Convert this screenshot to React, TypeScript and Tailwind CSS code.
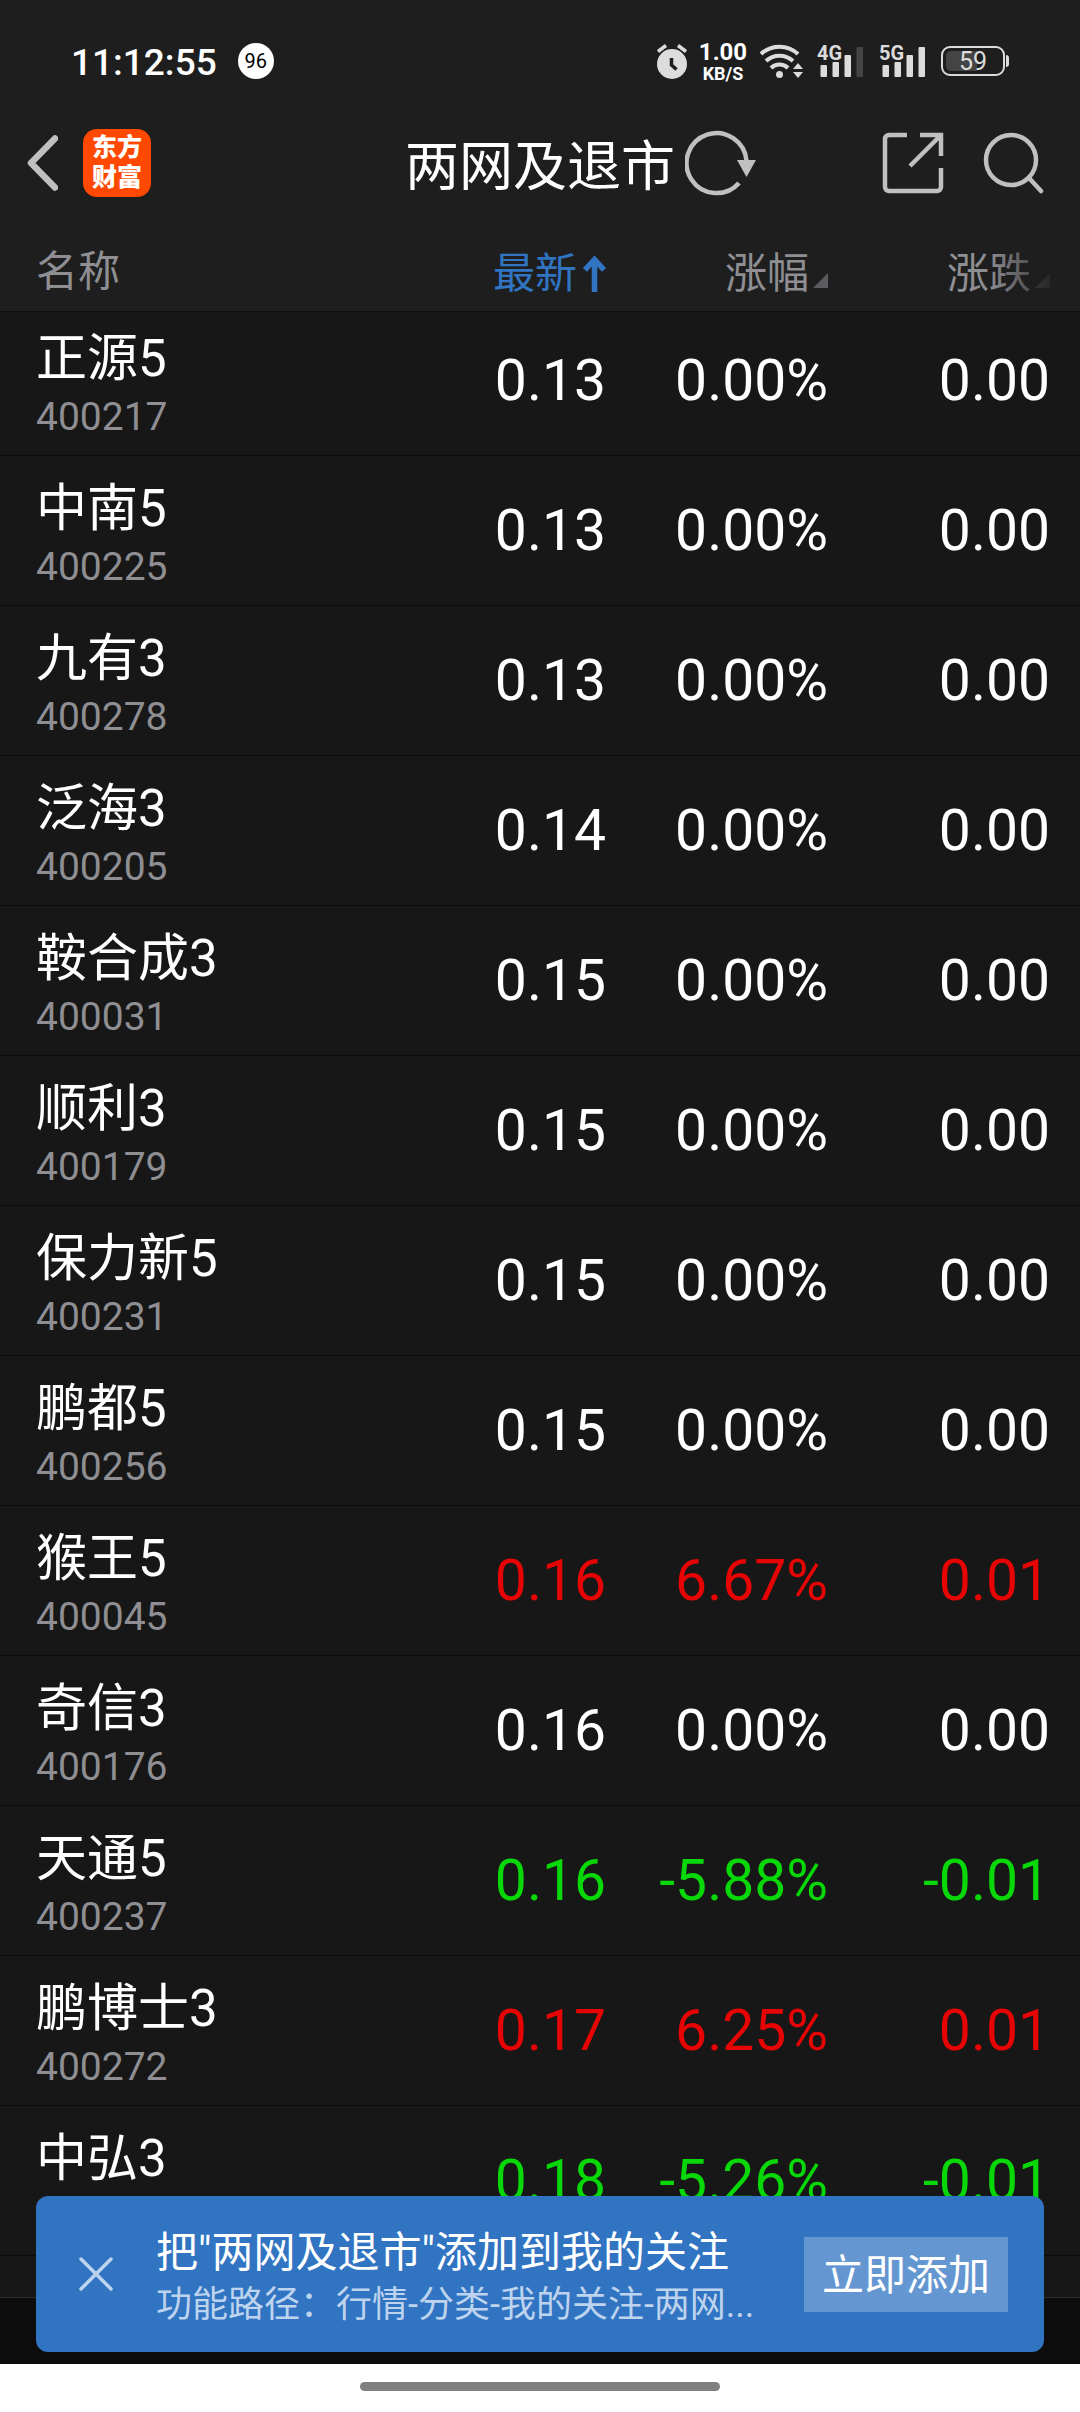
import { useState } from "react";

type Stock = { name: string; code: string; price: string; pct: string; change: string };

const stocks: Stock[] = [
  { name:"正源5",   code:"400217", price:"0.13", pct:"0.00%",  change:"0.00"  },
  { name:"中南5",   code:"400225", price:"0.13", pct:"0.00%",  change:"0.00"  },
  { name:"九有3",   code:"400278", price:"0.13", pct:"0.00%",  change:"0.00"  },
  { name:"泛海3",   code:"400205", price:"0.14", pct:"0.00%",  change:"0.00"  },
  { name:"鞍合成3", code:"400031", price:"0.15", pct:"0.00%",  change:"0.00"  },
  { name:"顺利3",   code:"400179", price:"0.15", pct:"0.00%",  change:"0.00"  },
  { name:"保力新5", code:"400231", price:"0.15", pct:"0.00%",  change:"0.00"  },
  { name:"鹏都5",   code:"400256", price:"0.15", pct:"0.00%",  change:"0.00"  },
  { name:"猴王5",   code:"400045", price:"0.16", pct:"6.67%",  change:"0.01"  },
  { name:"奇信3",   code:"400176", price:"0.16", pct:"0.00%",  change:"0.00"  },
  { name:"天通5",   code:"400237", price:"0.16", pct:"-5.88%", change:"-0.01" },
  { name:"鹏博士3", code:"400272", price:"0.17", pct:"6.25%",  change:"0.01"  },
  { name:"中弘3",   code:"",       price:"0.18", pct:"-5.26%", change:"-0.01" },
];

function trendColor(change: string) {
  if (change.startsWith("-")) return "text-[#08d808]";
  return change === "0.00" ? "text-white" : "text-[#e60404]";
}

function Signal({ label, weak }: { label: string; weak?: boolean }) {
  return (
    <div className="relative w-[50px] h-9">
      <span className="absolute left-0 top-0 text-[20px] leading-[20px] font-bold">{label}</span>
      <svg className="w-12 h-9" viewBox="0 0 48 36" fill="#dcdcdc">
        <rect x="3.5" y="22" width="6.5" height="12" rx="1"/>
        <rect x="15.5" y="19" width="6.5" height="15" rx="1"/>
        <rect x="27.5" y="12" width="6.5" height="22" rx="1"/>
        <rect x="39.5" y="4" width="6.5" height="30" rx="1" fill={weak ? "#444444" : "#dcdcdc"}/>
      </svg>
    </div>
  );
}

function StatusBar() {
  return (
    <div className="flex items-center justify-between h-[122px] pl-[71px] pr-[71px] text-[#dcdcdc]">
      <div className="flex items-center gap-[21px]">
        <span className="pt-1 text-[37px] font-medium text-white">11:12:55</span>
        <span className="w-9 h-9 rounded-full bg-white text-black text-[20px] leading-9 text-center">96</span>
      </div>
      <div className="flex items-center gap-3">
        <svg width="30" height="36" viewBox="0 0 30 36" fill="none">
          <circle cx="15" cy="21" r="15" fill="#dcdcdc"/>
          <path d="M1 8.5l8-6M29 8.5l-8-6" stroke="#dcdcdc" strokeWidth="3.5"/>
          <path d="M14.5 15v7l5 4.5" stroke="#1e1e1e" strokeWidth="3.5"/>
        </svg>
        <div className="flex flex-col items-center w-12 pt-1 text-white font-bold leading-[21px]">
          <span className="text-[24px]">1.00</span>
          <span className="text-[18px]">KB/S</span>
        </div>
        <svg width="46" height="36" viewBox="0 0 46 36" fill="none" stroke="#dcdcdc" strokeWidth="4">
          <path d="M2 11a27 27 0 0 1 37 0M7 18a20 20 0 0 1 27 0M12 25a12 12 0 0 1 17 0"/>
          <circle cx="20.5" cy="31.5" r="3.5" fill="#dcdcdc" stroke="none"/>
          <path d="M34 26l5-6 5 6zM34 29h10l-5 6z" fill="#dcdcdc" stroke="none"/>
        </svg>
        <Signal label="4G" weak/>
        <Signal label="5G"/>
        <div className="flex items-center gap-px">
          <div className="relative w-[64px] h-[30px] border-2 border-[#dcdcdc] rounded-[9px] flex items-center justify-center">
            <div className="absolute left-[3px] top-[3px] w-[31px] h-5 bg-[#444444] rounded-l-[5px]"/>
            <span className="relative pt-0.5 text-[25px] leading-[26px]">59</span>
          </div>
          <div className="w-[3px] h-3 bg-[#dcdcdc] rounded-r-sm"/>
        </div>
      </div>
    </div>
  );
}

function TitleBar() {
  return (
    <header className="grid grid-cols-[1fr_auto_1fr] items-center h-[82px] px-[26px]">
      <div className="flex items-center gap-[25px]">
        <button aria-label="返回">
          <svg width="32" height="56" viewBox="0 0 32 56" fill="none" stroke="#c0c0c0" strokeWidth="6.5" strokeLinecap="round" strokeLinejoin="round"><path d="M29 3.5L5 28l24 24.5"/></svg>
        </button>
        <a href="#home" className="w-[68px] h-[68px] rounded-[14px] bg-[#ff4800] text-white text-[25px] leading-[30px] font-black flex flex-col items-center justify-center">
          <span>东方</span>
          <span>财富</span>
        </a>
      </div>
      <h1 className="pt-2.5 text-[54px] leading-[60px] text-white">两网及退市</h1>
      <div className="flex items-center justify-between px-2.5">
        <button aria-label="刷新">
          <svg width="72" height="66" viewBox="0 0 72 66" fill="none">
            <path d="M54 53A30 30 0 1 1 61.5 31" stroke="#c0c0c0" strokeWidth="4.5"/>
            <path d="M52 30h19l-9.5 17z" fill="#c0c0c0"/>
          </svg>
        </button>
        <div className="flex items-center gap-[39px]">
          <button aria-label="分享">
            <svg width="62" height="62" viewBox="0 0 62 62" fill="none" stroke="#c0c0c0" strokeWidth="4.5">
              <path d="M25 3H7a4 4 0 0 0-4 4v48a4 4 0 0 0 4 4h48a4 4 0 0 0 4-4V36"/>
              <path d="M38 3h21v21M59 3L28 34"/>
            </svg>
          </button>
          <button aria-label="搜索">
            <svg width="61" height="62" viewBox="0 0 61 62" fill="none" stroke="#c0c0c0" strokeWidth="4.5" strokeLinecap="round"><circle cx="28" cy="28" r="25"/><path d="M46 46l12 13"/></svg>
          </button>
        </div>
      </div>
    </header>
  );
}

function SortCorner() {
  return <svg width="15" height="15" viewBox="0 0 15 15" fill="#5c5c60"><path d="M15 0v15H0z"/></svg>;
}

function AddBanner({ onClose }: { onClose: () => void }) {
  return (
    <div className="fixed left-9 right-9 bottom-[60px] h-[156px] rounded-xl bg-[#3074c2] flex items-center pl-[43px] pr-9">
      <button aria-label="关闭" onClick={onClose}>
        <svg width="34" height="34" viewBox="0 0 34 34" fill="none" stroke="#bdd3ee" strokeWidth="3.5" strokeLinecap="round"><path d="M2 2l30 30M32 2L2 32"/></svg>
      </button>
      <div className="flex-1 ml-[43px] pt-2 whitespace-nowrap">
        <p className="text-[42px] leading-[54px] text-white">把"两网及退市"添加到我的关注</p>
        <p className="text-[36px] leading-[50px] text-[#bdd3ee]">功能路径：行情-分类-我的关注-两网...</p>
      </div>
      <button className="w-[204px] h-[75px] pt-0.5 bg-[#6497d1] text-white text-[42px] leading-[73px]">立即添加</button>
    </div>
  );
}

export default function App() {
  const [showBanner, setShowBanner] = useState(true);

  return (
    <div className="min-h-screen flex flex-col bg-[#1e1e1e] font-['Roboto','Noto_Sans_CJK_SC',sans-serif]">
      <StatusBar/>
      <TitleBar/>

      <main className="flex-1 flex flex-col mt-[26px] bg-[#171717]">
        <table className="w-full table-fixed border-separate border-spacing-0 text-right">
          <thead>
            <tr className="h-[82px] bg-[#1e1e1e] text-[42px] leading-[50px] text-[#8e8e93]">
              <th className="pl-9 pt-0.5 text-left font-normal border-b border-[#101010]">名称</th>
              <th className="w-[222px] pt-1.5 font-normal border-b border-[#101010]">
                <button className="inline-flex items-center gap-1.5 text-[#3074c2]">
                  最新
                  <svg width="23" height="36" viewBox="0 0 23 36" fill="none" stroke="#3074c2" strokeWidth="5.5"><path d="M11.5 36V4M2 14L11.5 3.5 21 14"/></svg>
                </button>
              </th>
              <th className="w-[222px] pt-1.5 font-normal border-b border-[#101010]">
                <button className="inline-flex items-baseline gap-1">涨幅<SortCorner/></button>
              </th>
              <th className="relative w-[252px] pt-1.5 pr-[30px] font-normal border-b border-[#101010]">
                <button className="inline-flex items-baseline gap-1">涨跌<SortCorner/></button>
                <div className="absolute right-0 inset-y-0 w-[90px] bg-linear-to-r from-transparent to-[#1e1e1e] to-80%"/>
              </th>
            </tr>
          </thead>
          <tbody>
            {stocks.map(s => (
              <tr key={s.name} className={`h-[150px] first:h-[144px] align-bottom text-[57px] leading-[66px] ${trendColor(s.change)}`}>
                <td className="pl-9 pb-[13px] border-b border-[#0c0c0c] text-left">
                  <p className="text-[51px] leading-[66px] text-white">{s.name}</p>
                  <p className="h-[50px] text-[39px] leading-[50px] text-[#8e8e93]">{s.code}</p>
                </td>
                <td className="pb-[41px] border-b border-[#0c0c0c]">{s.price}</td>
                <td className="pb-[41px] border-b border-[#0c0c0c]">{s.pct}</td>
                <td className="pb-[41px] pr-[30px] border-b border-[#0c0c0c]">{s.change}</td>
              </tr>
            ))}
          </tbody>
        </table>
        <div className="flex-1"/>
      </main>

      <footer>
        <div className="h-[67px] bg-[#0c0c0c] border-t border-[#2a2a2a]"/>
        <div className="h-12 bg-white flex justify-center pt-[18px]">
          <div className="w-1/3 h-[9px] rounded-full bg-[#808080]"/>
        </div>
      </footer>

      {showBanner && <AddBanner onClose={() => setShowBanner(false)}/>}
    </div>
  );
}
